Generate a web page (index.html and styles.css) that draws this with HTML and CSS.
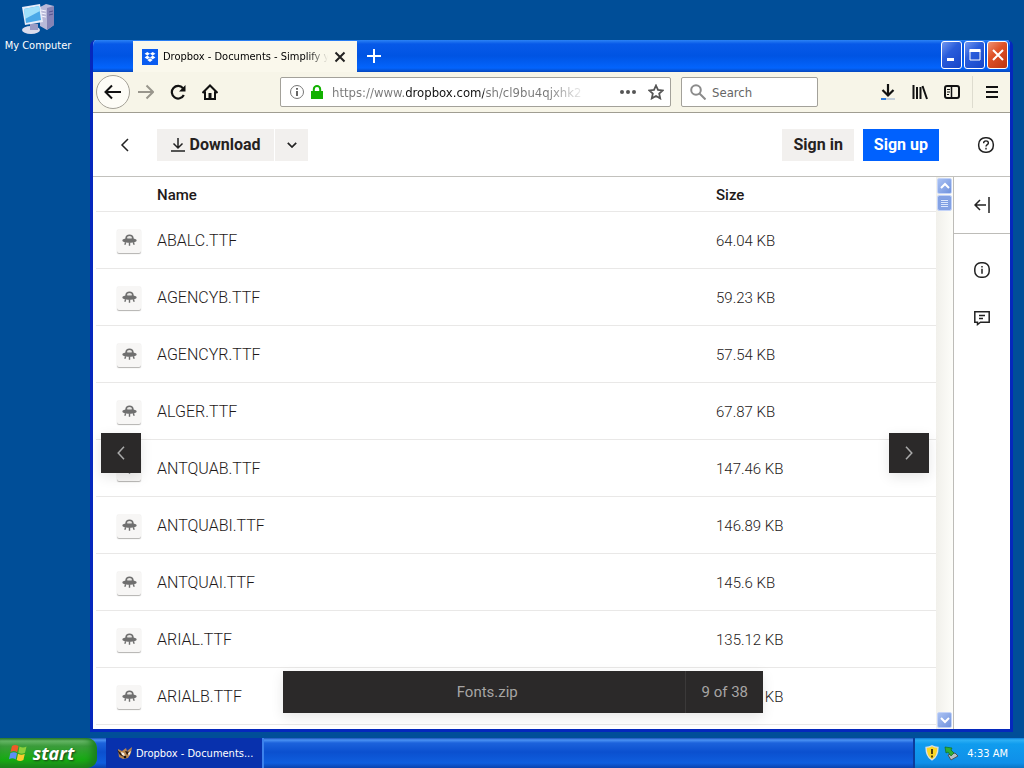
FILE: index.html
```html
<!DOCTYPE html>
<html lang="en">
<head>
    <meta charset="UTF-8">
    <meta name="viewport" content="width=device-width, initial-scale=1.0">
    <title>Dropbox - Documents</title>
    <link rel="stylesheet" href="styles.css">
</head>
<body>

    <svg width="0" height="0" class="defs">
        <symbol id="ufo" viewBox="0 0 16 14">
            <path d="M3.500 5.500C3.500 2.500 5.300 1 8 1s4.500 1.500 4.500 4.500c1.900.500 3.100 1.200 3.100 2 0 1.500-3.200 2.400-7.600 2.400S.4 9 .4 7.500c0-.8 1.200-1.500 3.100-2z" fill="#6f6f6f"/>
            <path d="M5.300 5.200c0-1.700 1-2.600 2.700-2.600s2.700.9 2.700 2.600c-1.500.4-3.900.4-5.400 0z" fill="#e6e5e3"/>
            <path d="M4 9.500L3 12M8 9.500V13M12 9.500l1 2.500" stroke="#6f6f6f" stroke-width="1.500"/>
        </symbol>
    </svg>

    <main class="desktop">
        <a href="#" class="shortcut">
            <svg width="34" height="32" viewBox="0 0 34 32">
                <path d="M19 4l6-3 8 2v19l-7 5-7-4z" fill="#b9b9d8"/>
                <path d="M26 5l7-2v19l-7 5z" fill="#8583b5"/>
                <path d="M20 7l5 1M20 10l5 1M20 13l5 1" stroke="#f6f6ff"/>
                <path d="M28 9l4-1M28 12l4-1" stroke="#55538f"/>
                <ellipse cx="10" cy="27" rx="9" ry="4" fill="#dcdcec"/>
                <path d="M9 20l8 1v6H9z" fill="#9b9bc4"/>
                <path d="M1 4l18-3 3 18-18 3z" fill="#e8ecf8"/>
                <path d="M3 6l15-3 2 14-15 3z" fill="#4ba9e8"/>
                <path d="M3 6l15-3 1 5-15 8z" fill="#9fe0fb"/>
            </svg>
            <span>My Computer</span>
        </a>

        <section class="window">
            <header class="titlebar">
                <div class="tab">
                    <svg width="16" height="16" viewBox="0 0 16 16">
                        <rect width="16" height="16" fill="#0a5cf0"/>
                        <path d="M5.300 3L8 4.800 5.300 6.600 2.600 4.800zM10.700 3l2.700 1.800-2.700 1.800L8 4.800zM5.300 6.600L8 8.400l-2.700 1.800-2.700-1.800zM10.700 6.600l2.700 1.800-2.700 1.800L8 8.400zM8 9.300l2.700 1.800L8 12.900l-2.700-1.800z" fill="#fff"/>
                    </svg>
                    <span class="tab-title">Dropbox - Documents - Simplify yo</span>
                    <button class="tab-close" aria-label="Close tab">
                        <svg width="12" height="12" viewBox="0 0 12 12"><path d="M1.500 1.500l9 9M10.500 1.500l-9 9" stroke="#222" stroke-width="2"/></svg>
                    </button>
                </div>
                <button class="new-tab" aria-label="New tab">
                    <svg width="14" height="14" viewBox="0 0 14 14"><path d="M7 0v14M0 7h14" stroke="#fff" stroke-width="2"/></svg>
                </button>
                <div class="window-buttons">
                    <button aria-label="Minimize"><svg width="20" height="26" viewBox="0 0 20 26"><path d="M5 17.500h7" stroke="#fff" stroke-width="3"/></svg></button>
                    <button aria-label="Maximize"><svg width="20" height="26" viewBox="0 0 20 26"><path d="M5 8.500h10V18H5z" fill="none" stroke="#fff"/><path d="M4.500 8.500h11" stroke="#fff" stroke-width="3"/></svg></button>
                    <button class="close" aria-label="Close"><svg width="20" height="26" viewBox="0 0 20 26"><path d="M5 8l10 10M15 8L5 18" stroke="#fff" stroke-width="2"/></svg></button>
                </div>
            </header>

            <nav class="navbar">
                <button class="back" aria-label="Back">
                    <svg width="18" height="16" viewBox="0 0 18 16"><path d="M17 8H2M8 1.500L1.500 8 8 14.500" fill="none" stroke="#111" stroke-width="2"/></svg>
                </button>
                <button class="nav-icon" aria-label="Forward">
                    <svg width="16" height="16" viewBox="0 0 16 16"><path d="M0 8h14M8.500 1.500L15 8l-6.500 6.500" fill="none" stroke="#99968c" stroke-width="2"/></svg>
                </button>
                <button class="nav-icon" aria-label="Reload">
                    <svg width="16" height="16" viewBox="0 0 16 16"><path d="M13 4.200A6.300 6.300 0 1 0 13.800 11" fill="none" stroke="#111" stroke-width="2.200"/><path d="M15.500 1v6.500H9z" fill="#111"/></svg>
                </button>
                <button class="nav-icon" aria-label="Home">
                    <svg width="16" height="16" viewBox="0 0 16 16"><path d="M.5 9L8 1.500 15.500 9M3 7.500V15h10V7.500" fill="none" stroke="#111" stroke-width="2"/><path d="M6.500 9h3v6h-3z" fill="#111"/></svg>
                </button>
                <div class="url-box">
                    <svg width="16" height="16" viewBox="0 0 16 16"><circle cx="8" cy="8" r="6.500" fill="none" stroke="#777"/><path d="M8 7v5M8 4v1.800" stroke="#666" stroke-width="2"/></svg>
                    <svg width="12" height="14" viewBox="0 0 12 14"><path d="M0 6h12v8H0z" fill="#12b100"/><path d="M2.800 6.500V4.200a3.200 3.200 0 0 1 6.400 0v2.300" fill="none" stroke="#12b100" stroke-width="2"/></svg>
                    <input type="text" class="url" aria-label="Address" value="https://www.dropbox.com/sh/cl9bu4qjxhk2">
                    <button aria-label="Page actions"><svg width="16" height="4" viewBox="0 0 16 4"><circle cx="2" cy="2" r="2"/><circle cx="8" cy="2" r="2"/><circle cx="14" cy="2" r="2"/></svg></button>
                    <button aria-label="Bookmark"><svg width="16" height="16" viewBox="0 0 16 16"><path d="M8 1.500l2 4.400 4.700.5-3.500 3.200 1 4.800L8 12l-4.200 2.400 1-4.800L1.300 6.400 6 5.900z" fill="none" stroke="#555" stroke-width="1.800"/></svg></button>
                </div>
                <div class="search-box">
                    <svg width="16" height="16" viewBox="0 0 16 16"><circle cx="6" cy="6" r="4.800" fill="none" stroke="#8b8b8b" stroke-width="2"/><path d="M9.500 9.500L15.500 15.500" stroke="#8b8b8b" stroke-width="2"/></svg>
                    <input type="text" class="search" aria-label="Search" placeholder="Search">
                </div>
                <div class="nav-right">
                    <button class="nav-icon" aria-label="Downloads"><svg width="16" height="16" viewBox="0 0 16 16"><path d="M8 0v11M2.500 6L8 11.500 13.500 6" fill="none" stroke="#111" stroke-width="2.200"/><path d="M1 15h14" stroke="#c3cfda" stroke-width="2"/><path d="M1 15h5" stroke="#2c7be0" stroke-width="2"/></svg></button>
                    <button class="nav-icon" aria-label="Library"><svg width="16" height="16" viewBox="0 0 16 16"><path d="M1.500 1v14M5 3v12M8.500 3v12M10.500 2l4.500 13" stroke="#111" stroke-width="2"/></svg></button>
                    <button class="nav-icon" aria-label="Sidebars"><svg width="16" height="16" viewBox="0 0 16 16"><rect x="1" y="2" width="14" height="12" rx="2" fill="none" stroke="#111" stroke-width="2"/><path d="M7.500 2v12" stroke="#111" stroke-width="1.500"/><path d="M3 5.500h3M3 8h3M3 10.500h2" stroke="#111"/></svg></button>
                    <button class="nav-icon menu" aria-label="Menu"><svg width="12" height="12" viewBox="0 0 12 12"><path d="M0 1h12M0 6h12M0 11h12" stroke="#111" stroke-width="2"/></svg></button>
                </div>
            </nav>

            <div class="page-bar">
                <button class="page-back" aria-label="Go back"><svg width="10" height="14" viewBox="0 0 10 14"><path d="M8 1L2 7l6 6" fill="none" stroke="#222" stroke-width="1.500"/></svg></button>
                <div class="split">
                    <button class="btn download"><svg width="14" height="14" viewBox="0 0 14 14"><path d="M7 0v9.500M2.500 5.500L7 10l4.500-4.500M0 13h14" fill="none" stroke="#222" stroke-width="1.500"/></svg>Download</button>
                    <button class="btn more" aria-label="More download options"><svg width="10" height="6" viewBox="0 0 10 6"><path d="M.8.8L5 5 9.200.8" fill="none" stroke="#222" stroke-width="1.700"/></svg></button>
                </div>
                <button class="btn sign-in">Sign in</button>
                <button class="btn primary">Sign up</button>
                <button class="help" aria-label="Help"><svg width="18" height="18" viewBox="0 0 18 18"><rect x="1.700" y="1.700" width="14.600" height="14.600" rx="6.500" fill="none" stroke="#222" stroke-width="1.500"/><path d="M6.600 7.200c0-3.200 4.800-3 4.800-.3 0 1.700-2.400 1.800-2.400 3.600M9 11.800v1.700" fill="none" stroke="#222" stroke-width="1.400"/></svg></button>
            </div>

            <div class="content">
                <div class="viewer">
                    <div class="list">
                        <table>
                            <thead>
                                <tr><th class="col-icon"></th><th>Name</th><th class="col-size">Size</th></tr>
                            </thead>
                            <tbody>
                                <tr><td><span class="file"><svg><use href="#ufo"/></svg></span></td><td class="name">ABALC.TTF</td><td>64.04 KB</td></tr>
                                <tr><td><span class="file"><svg><use href="#ufo"/></svg></span></td><td class="name">AGENCYB.TTF</td><td>59.23 KB</td></tr>
                                <tr><td><span class="file"><svg><use href="#ufo"/></svg></span></td><td class="name">AGENCYR.TTF</td><td>57.54 KB</td></tr>
                                <tr><td><span class="file"><svg><use href="#ufo"/></svg></span></td><td class="name">ALGER.TTF</td><td>67.87 KB</td></tr>
                                <tr><td><span class="file"><svg><use href="#ufo"/></svg></span></td><td class="name">ANTQUAB.TTF</td><td>147.46 KB</td></tr>
                                <tr><td><span class="file"><svg><use href="#ufo"/></svg></span></td><td class="name">ANTQUABI.TTF</td><td>146.89 KB</td></tr>
                                <tr><td><span class="file"><svg><use href="#ufo"/></svg></span></td><td class="name">ANTQUAI.TTF</td><td>145.6 KB</td></tr>
                                <tr><td><span class="file"><svg><use href="#ufo"/></svg></span></td><td class="name">ARIAL.TTF</td><td>135.12 KB</td></tr>
                                <tr><td><span class="file"><svg><use href="#ufo"/></svg></span></td><td class="name">ARIALB.TTF</td><td>138.46 KB</td></tr>
                            </tbody>
                        </table>
                    </div>
                    <div class="scrollbar">
                        <button aria-label="Scroll up"><svg width="10" height="8" viewBox="0 0 10 8"><path d="M1 6l4-4 4 4" fill="none" stroke="#fff" stroke-width="2"/></svg></button>
                        <div class="thumb"></div>
                        <button class="down" aria-label="Scroll down"><svg width="10" height="8" viewBox="0 0 10 8"><path d="M1 2l4 4 4-4" fill="none" stroke="#fff" stroke-width="2"/></svg></button>
                    </div>
                    <button class="pager prev" aria-label="Previous file"><svg width="8" height="14" viewBox="0 0 8 14"><path d="M7 .8L1.200 7 7 13.200" fill="none" stroke="#aaa" stroke-width="1.500"/></svg></button>
                    <button class="pager next" aria-label="Next file"><svg width="8" height="14" viewBox="0 0 8 14"><path d="M1 .8L6.800 7 1 13.200" fill="none" stroke="#aaa" stroke-width="1.500"/></svg></button>
                    <div class="file-bar">
                        <span class="file-name">Fonts.zip</span>
                        <span class="file-count">9 of 38</span>
                    </div>
                </div>
                <aside class="sidebar">
                    <button class="expand" aria-label="Open sidebar"><svg width="16" height="16" viewBox="0 0 16 16"><path d="M12 8H1.500M6 3L1 8l5 5M15 0v16" fill="none" stroke="#222" stroke-width="1.500"/></svg></button>
                    <button aria-label="Info"><svg width="16" height="16" viewBox="0 0 16 16"><rect x=".8" y=".8" width="14.400" height="14.400" rx="6" fill="none" stroke="#222" stroke-width="1.500"/><path d="M8 6.800v5M8 4v1.600" stroke="#222" stroke-width="1.500"/></svg></button>
                    <button aria-label="Comments"><svg width="16" height="16" viewBox="0 0 16 16"><path d="M.8 1.800h14.400v10.400H6.500L3.500 14.500V12.200H.8z" fill="none" stroke="#222" stroke-width="1.500"/><path d="M5 5.500h6M5 8.500h4" stroke="#222" stroke-width="1.300"/></svg></button>
                </aside>
            </div>
        </section>
    </main>

    <footer class="taskbar">
        <button class="start">
            <svg width="20" height="20" viewBox="0 0 20 20">
                <path d="M3 3c2-1.500 4-1.500 6.500 0L8.200 9.200C6 7.800 4 7.800 1.500 9z" fill="#ee5a28"/>
                <path d="M10.500 3.500c2.500 1.300 4.500 1.300 7 0L16 9.700c-2.500 1.300-4.500 1.300-6.700 0z" fill="#8ccf3c"/>
                <path d="M1.300 10.200c2.500-1.300 4.500-1.300 6.700 0l-1.300 6.300C4.500 15 2.500 15 0 16.300z" fill="#5d8ff5"/>
                <path d="M9 10.800c2.500 1.300 4.500 1.300 6.800 0l-1.400 6.200c-2.400 1.300-4.400 1.300-6.700 0z" fill="#fccb2e"/>
            </svg>
            start
        </button>
        <button class="task">
            <svg width="16" height="14" viewBox="0 0 16 14">
                <path d="M1 3l4 2 4-3 1 3 5-4-1 6-3 5-5 1-4-2z" fill="#b9864e"/>
                <path d="M0 4l4 3 3 4-4-2zM8 5l5 1-3 3z" fill="#2a1a12"/>
                <path d="M4 6l3 1 1 3-3-1zM11 7l3-2-2 5z" fill="#f7f0e4"/>
                <circle cx="8" cy="11" r="1.300" fill="#111"/>
            </svg>
            Dropbox - Documents...
        </button>
        <div class="tray">
            <svg width="14" height="16" viewBox="0 0 14 16"><path d="M7 .8C5 2 3 2.300 1 2.300c0 6 1 10 6 12.700 5-2.700 6-6.700 6-12.700-2 0-4-.3-6-1.500z" fill="#fbd726" stroke="#d8e0e8" stroke-width="1.300"/><path d="M7 4v5M7 10.500v2" stroke="#43330a" stroke-width="1.800"/></svg>
            <svg width="14" height="15" viewBox="0 0 14 15"><path d="M4 9l7-2 3 3-7 4z" fill="#b8bfc4" stroke="#4a5258"/><path d="M1 1l7 1-1 2 3 3-3 3-3-4-2 1z" fill="#2fae35" stroke="#14701c" stroke-width=".7"/></svg>
            <span>4:33 AM</span>
        </div>
    </footer>

</body>
</html>
```
FILE: styles.css
```css
* {
    box-sizing: border-box;
}

body {
    display: flex;
    flex-direction: column;
    height: 100vh;
    margin: 0;
    overflow: hidden;
    background-color: #004e98;
    font-family: "DejaVu Sans Condensed", "DejaVu Sans", sans-serif;
    font-size: 11px;
}

button {
    display: flex;
    align-items: center;
    justify-content: center;
    margin: 0;
    padding: 0;
    border: none;
    background: none;
    font: inherit;
    cursor: pointer;
}

svg {
    display: block;
    flex: none;
}

.defs {
    position: absolute;
}

.desktop {
    position: relative;
    flex: 1;
    min-height: 0;
}

.shortcut {
    display: flex;
    flex-direction: column;
    align-items: center;
    gap: 4px;
    width: 76px;
    padding-top: 3px;
    color: white;
    text-decoration: none;
    white-space: nowrap;
}

/* browser window */
.window {
    position: absolute;
    top: 40px;
    right: 11px;
    bottom: 6px;
    left: 90px;
    display: flex;
    flex-direction: column;
    overflow: hidden;
    border: 3px solid #0528bd;
    border-top: none;
    border-radius: 6px 6px 0 0;
    background-color: white;
}

.titlebar {
    display: flex;
    flex: none;
    height: 32px;
    padding-left: 40px;
    background: linear-gradient(#2c83f5 0, #0759e8 4px, #0054e3 16px, #0364fd 28px, #0546bd 32px);
}

.tab {
    display: flex;
    align-items: center;
    gap: 5px;
    width: 224px;
    margin-top: 1px;
    padding: 0 10px 0 9px;
    background-color: #faf8ec;
}

.tab-title {
    flex: 1;
    min-width: 0;
    white-space: nowrap;
    mask-image: linear-gradient(to right, black 88%, transparent);
}

.tab-close {
    width: 14px;
    height: 20px;
}

.new-tab {
    width: 34px;
}

.window-buttons {
    display: flex;
    gap: 2px;
    margin-left: auto;
    padding: 1px 2px 3px 0;
}

.window-buttons button {
    width: 21px;
    border: 1px solid white;
    border-radius: 3px;
    background: linear-gradient(135deg, #7398f0, #2a5ddb 40%, #1645c8);
    overflow: hidden;
}

.window-buttons .close {
    background: linear-gradient(135deg, #ee9274, #df5228 40%, #bd3410);
}

.navbar {
    display: flex;
    flex: none;
    align-items: center;
    height: 41px;
    padding-left: 3px;
    border-bottom: 1px solid #a09d92;
    background-color: #f7f5e8;
}

.back {
    width: 34px;
    height: 34px;
    border: 1px solid #a3a096;
    border-radius: 50%;
    background-color: #fdfcf6;
}

.nav-icon {
    width: 32px;
    height: 32px;
}

.url-box,
.search-box {
    display: flex;
    align-items: center;
    height: 30px;
    border: 1px solid #a3a19a;
    border-radius: 2px;
    background-color: white;
}

.url-box {
    flex: 1;
    gap: 6px;
    max-width: 391px;
    margin-left: 54px;
    padding: 0 3px 0 8px;
}

.url-box button {
    width: 22px;
    height: 22px;
    fill: #555;
}

.url,
.search {
    min-width: 0;
    padding: 0;
    border: none;
    outline: none;
    background: none;
    font: inherit;
    font-size: 13px;
}

/* the host part of the address is darker, the end fades out */
.url {
    flex: 1;
    margin-left: 3px;
    color: transparent;
    background: linear-gradient(to right, #777 74px, #111 74px, #111 152px, #777 152px, #777 215px, transparent 255px);
    background-clip: text;
    -webkit-background-clip: text;
}

.search-box {
    gap: 6px;
    width: 137px;
    margin-left: 10px;
    padding: 0 8px;
}

.search {
    width: 100%;
}

.search::placeholder {
    color: #666;
    opacity: 1;
}

.nav-right {
    display: flex;
    margin-left: auto;
}

.menu {
    width: 38px;
    margin-left: 4px;
    border-left: 1px solid #dedccf;
}

/* page */
.page-bar {
    display: flex;
    flex: none;
    align-items: center;
    height: 64px;
    padding: 0 15px 0 20px;
    border-bottom: 1px solid #c2c1bd;
    font-family: Roboto, "Liberation Sans", sans-serif;
}

.page-back {
    width: 24px;
    height: 32px;
}

.split {
    display: flex;
    gap: 1px;
    margin: 0 auto 0 20px;
}

.btn {
    height: 32px;
    padding: 0 11px;
    background-color: #f2f0ee;
    color: #26221f;
    font-size: 16px;
    font-weight: bold;
    white-space: nowrap;
}

.download {
    gap: 5px;
    width: 117px;
}

.more {
    width: 33px;
}

.primary {
    margin-left: 9px;
    background-color: #0061fe;
    color: white;
}

.help {
    width: 18px;
    margin-left: 38px;
}

.content {
    display: flex;
    flex: 1;
    min-height: 0;
}

.viewer {
    position: relative;
    display: flex;
    flex: 1;
    font-family: Roboto, "Liberation Sans", sans-serif;
}

.list {
    flex: 1;
    overflow: hidden;
    padding-left: 3px;
}

table {
    width: 100%;
    table-layout: fixed;
    border-collapse: separate;
    border-spacing: 0;
    color: #1e1919;
    font-size: 15px;
    font-weight: 300;
}

th,
td {
    height: 57px;
    padding: 1px 0 0;
    border-bottom: 1px solid #e9e8e7;
    text-align: left;
}

th {
    height: 35px;
    font-weight: 500;
}

.name {
    font-size: 16px;
}

.col-icon {
    width: 61px;
}

.col-size {
    width: 220px;
}

.file {
    display: flex;
    justify-content: center;
    width: 24px;
    height: 24px;
    margin-left: 21px;
    padding-top: 4px;
    border-radius: 2px;
    background-color: #f7f6f5;
    box-shadow: 0 1px 1px #b3b2b0;
}

.file svg {
    width: 15px;
    height: 14px;
}

.scrollbar {
    display: flex;
    flex-direction: column;
    width: 17px;
    padding: 1px 0 0 1px;
    background: linear-gradient(to right, #f1f0eb, #fdfdf9);
}

.scrollbar button,
.thumb {
    width: 15px;
    height: 16px;
    margin-bottom: 1px;
    border: 1px solid #c3d3f8;
    border-radius: 2px;
    background: linear-gradient(135deg, #a9c1f3, #7193dd);
}

.thumb {
    padding: 3px;
    background-image: repeating-linear-gradient(#dce7fd 0 1px, #7d9de2 1px 2px);
    background-clip: content-box;
    background-color: #84a2e4;
    box-shadow: inset 0 0 0 3px #84a2e4;
}

.scrollbar .down {
    margin-top: auto;
}

.pager {
    position: absolute;
    top: calc(50% - 20px);
    width: 40px;
    height: 40px;
    background-color: #2b2929;
    box-shadow: 0 4px 12px rgba(0, 0, 0, 0.1);
}

.prev {
    left: 8px;
}

.next {
    right: 24px;
}

.file-bar {
    position: absolute;
    bottom: 16px;
    left: calc(50% - 240px);
    display: flex;
    width: 480px;
    height: 42px;
    background-color: #2b2929;
    box-shadow: 0 4px 12px rgba(0, 0, 0, 0.1);
    color: #a7a5a4;
    font-size: 15px;
    line-height: 42px;
    text-align: center;
}

.file-name {
    flex: 1;
    padding-left: 6px;
}

.file-count {
    padding: 0 15px;
    border-left: 1px solid #3b3939;
}

.sidebar {
    display: flex;
    flex-direction: column;
    width: 57px;
    border-left: 1px solid #bdbcb8;
}

.sidebar button {
    height: 48px;
}

.sidebar .expand {
    height: 57px;
    margin-bottom: 12px;
    border-bottom: 1px solid #bdbcb8;
}

/* taskbar */
.taskbar {
    display: flex;
    height: 30px;
    background: linear-gradient(#1d50b8 0, #4a92f3 2px, #1c62dc 5px, #0b50cf 14px, #0f5ede 25px, #0a42ae 30px);
}

.taskbar button {
    color: white;
}

.start {
    gap: 4px;
    width: 97px;
    padding-right: 14px;
    border-radius: 0 10px 10px 0;
    background: linear-gradient(#2c752c 0, #69b869 3px, #3b9b3b 8px, #16ac12 22px, #1f8f1c 30px);
    box-shadow: inset -5px -2px 7px #1a7f1c;
}

.taskbar .start {
    font-family: "Open Sans", sans-serif;
    font-size: 18px;
    font-style: italic;
    font-weight: bold;
    text-shadow: 1px 1px 2px #1c3d1c;
}

.task {
    gap: 3px;
    justify-content: flex-start;
    width: 158px;
    margin-left: 9px;
    padding-left: 11px;
    border-right: 2px solid #3c82ec;
    background-color: #0831ad;
    white-space: nowrap;
}

.tray {
    display: flex;
    align-items: center;
    gap: 5px;
    margin-left: auto;
    padding: 0 16px 0 10px;
    border-left: 2px solid #0b3c9c;
    background: linear-gradient(#0d7bd8 0, #2db0f5 2px, #109cee 6px, #0f8fe9 25px, #0b74c4 30px);
    color: white;
}

.tray span {
    margin-left: 4px;
}
```
